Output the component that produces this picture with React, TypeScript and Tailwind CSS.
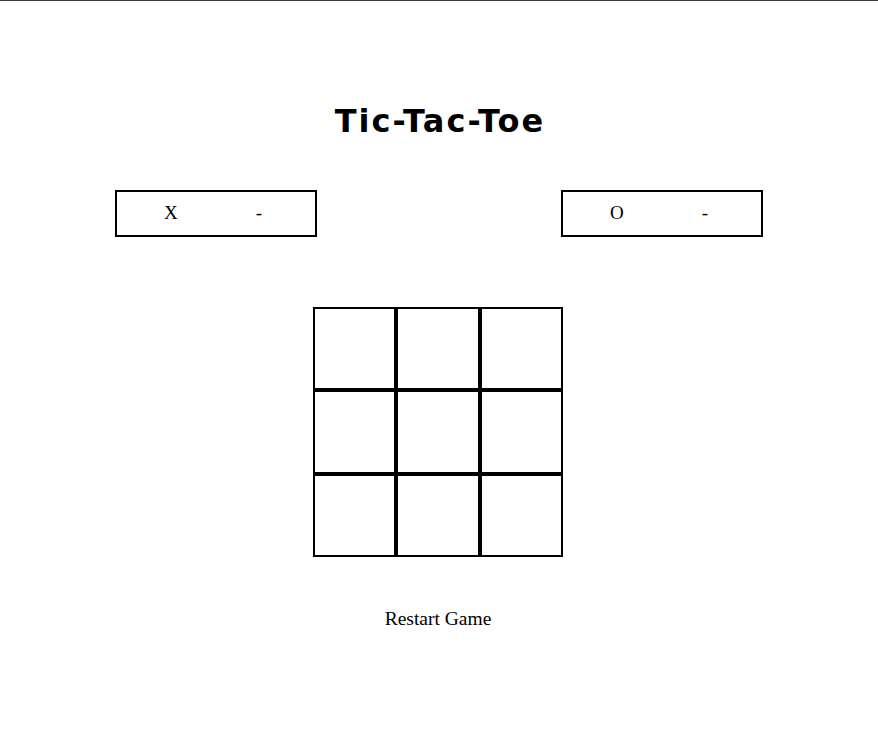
import { useState } from 'react';

type Cell = 'X' | 'O' | null;

const ScoreBox = ({ label, score }: { label: string; score: string }) => (
    <div className="w-[202px] h-[47px] border-2 border-black flex items-center pl-[47px] gap-[78px] text-[19px]">
        <span>{label}</span>
        <span>{score}</span>
    </div>
);

export default function App() {
    const [cells, setCells] = useState<Cell[]>(Array(9).fill(null));
    const [turn, setTurn] = useState<'X' | 'O'>('X');

    const play = (i: number) => {
        if (cells[i]) return;
        const next = [...cells];
        next[i] = turn;
        setCells(next);
        setTurn(turn === 'X' ? 'O' : 'X');
    };

    const restart = () => {
        setCells(Array(9).fill(null));
        setTurn('X');
    };

    return (
        <div className="min-h-screen bg-white border-t border-[#3c3c3c] text-black font-['Liberation_Serif',serif]">
            <h1 className="pt-[102px] pl-[2px] text-center font-['DejaVu_Sans',sans-serif] font-bold text-[32px] leading-[37px] tracking-[2px]">
                Tic-Tac-Toe
            </h1>

            <div className="w-[648px] mx-auto mt-[50px] flex justify-between">
                <ScoreBox label="X" score="-" />
                <ScoreBox label="O" score="-" />
            </div>

            <div className="mt-[70px] pr-[2px] flex justify-center">
                <div className="w-[250px] h-[250px] grid grid-cols-3 grid-rows-3">
                    {cells.map((c, i) => (
                        <button
                            key={i}
                            onClick={() => play(i)}
                            className="border-2 border-black flex items-center justify-center text-[40px]"
                        >
                            {c}
                        </button>
                    ))}
                </div>
            </div>

            <div className="mt-[51px] pr-[2px] flex justify-center">
                <button onClick={restart} className="text-[19.5px] leading-[22px] cursor-pointer">
                    Restart Game
                </button>
            </div>
        </div>
    );
}
